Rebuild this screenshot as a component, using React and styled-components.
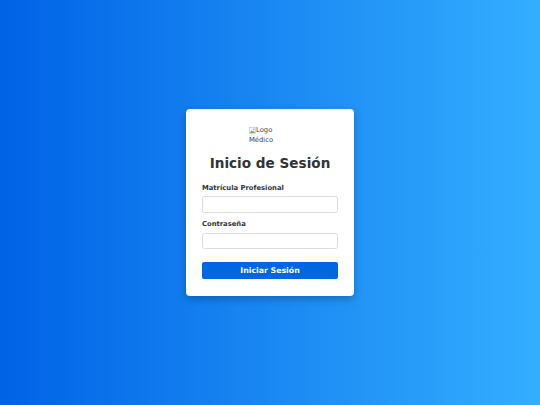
import React from 'react';
import styled, { createGlobalStyle } from 'styled-components';

const GlobalStyle = createGlobalStyle`
  * { box-sizing: border-box; }
  html, body { margin: 0; padding: 0; height: 100%; }
  body { font-family: "DejaVu Sans", Verdana, sans-serif; }
  #root { height: 100%; }
`;

const Page = styled.div`
  min-height: 100vh;
  display: flex;
  align-items: center;
  justify-content: center;
  background: linear-gradient(to right, #0062e6, #33aeff);
`;

const Card = styled.form`
  width: 168px;
  background: #fff;
  border-radius: 4px;
  padding: 16px 16px 17px;
  box-shadow: 0 3px 8px rgba(0, 0, 0, 0.25);
  display: flex;
  flex-direction: column;
`;

const LogoBox = styled.div`
  width: 42px;
  margin: 0 auto;
  font-size: 6.8px;
  line-height: 10px;
  color: #444;
  display: flex;
  flex-direction: column;
`;

const LogoLine = styled.span`
  display: flex;
  align-items: center;
  white-space: nowrap;
`;

const Title = styled.h1`
  margin: 10px 0 12px;
  font-size: 13.6px;
  line-height: 17px;
  font-weight: 700;
  color: #333;
  text-align: center;
`;

const Label = styled.label`
  display: block;
  font-size: 6.8px;
  line-height: 9px;
  font-weight: 700;
  color: #333;
  margin-bottom: ${props => props.$gap || 3}px;
`;

const Input = styled.input`
  width: 100%;
  height: 16.5px;
  border: 1px solid #dcdcdc;
  border-radius: 2.5px;
  background: #fff;
  margin-bottom: ${props => props.$after || 7}px;
  outline: none;
`;

const Button = styled.button`
  width: 100%;
  height: 17px;
  border: none;
  border-radius: 2px;
  background: #0066e3;
  color: #fff;
  font-family: "DejaVu Sans", Verdana, sans-serif;
  font-size: 7.8px;
  font-weight: 700;
  padding: 0;
`;

const BrokenIcon = () => (
  <svg width="7" height="7" viewBox="0 0 16 16">
    <rect x="1" y="1" width="14" height="14" fill="#f4f4f4" stroke="#aaa" />
    <path d="M2 13 L6 8 L9 11 L11 9 L14 13 Z" fill="#5a9e4a" />
    <circle cx="11" cy="5" r="1.6" fill="#6aa3d8" />
  </svg>
);

export default function App() {
  return (
    <>
      <GlobalStyle />
      <Page>
        <Card onSubmit={e => e.preventDefault()}>
          <LogoBox>
            <LogoLine><BrokenIcon />Logo</LogoLine>
            <LogoLine>Médico</LogoLine>
          </LogoBox>
          <Title>Inicio de Sesión</Title>
          <Label>Matrícula Profesional</Label>
          <Input type="text" />
          <Label $gap={4}>Contraseña</Label>
          <Input type="password" $after={13} />
          <Button type="submit">Iniciar Sesión</Button>
        </Card>
      </Page>
    </>
  );
}
